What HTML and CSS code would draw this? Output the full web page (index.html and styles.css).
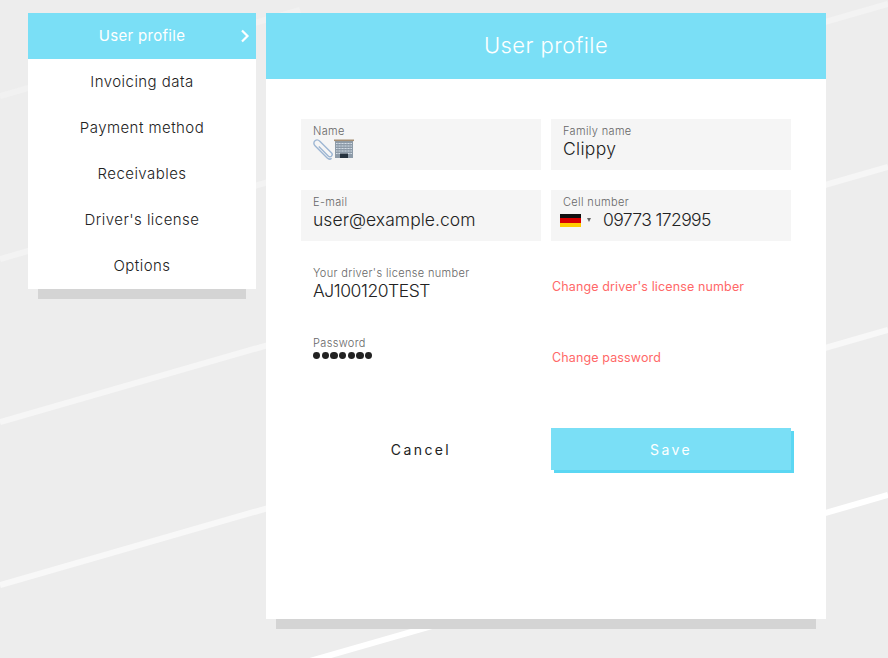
FILE: index.html
```html
<!DOCTYPE html>
<html lang="en">
<head>
<meta charset="utf-8">
<title>User profile</title>
<link rel="stylesheet" href="styles.css">
</head>
<body>
<svg class="backdrop" viewBox="0 0 888 658" width="888" height="658" aria-hidden="true">
  <path class="l1" d="M0 96 L300 10"/>
  <path class="l2" d="M0 259 L888 4"/>
  <path class="l3" d="M0 422 L888 167"/>
  <path class="l4" d="M0 585 L888 330"/>
  <path class="l5" d="M0 750 L888 495"/>
</svg>
<div class="page">
  <nav class="menu">
    <a class="menu-item active">User profile
      <svg class="chevron" viewBox="0 0 10 14" width="10" height="14"><path d="M2 1.5 L7.5 7 L2 12.5"/></svg>
    </a>
    <a class="menu-item">Invoicing data</a>
    <a class="menu-item">Payment method</a>
    <a class="menu-item">Receivables</a>
    <a class="menu-item">Driver's license</a>
    <a class="menu-item">Options</a>
  </nav>
  <main class="panel">
    <h1 class="panel-title">User profile</h1>
    <form class="form">
      <div class="field filled">
        <label>Name</label>
        <div class="value emoji">
          <svg viewBox="0 0 21 21" width="21" height="21"><path d="M18.6 19.2 C17.4 20.4 15.4 20.2 14.2 19 L2 6.8 C0.4 5.2 0.6 3 2 1.8 C3.4 0.6 5.4 0.8 6.8 2.2 L18.4 13.8 C19.4 14.8 19.4 16.2 18.4 17.2 C17.4 18 16.2 18 15.2 17 L5.8 7.6" fill="none" stroke="#9db6d3" stroke-width="1.4"/></svg>
          <svg viewBox="0 0 20 20" width="20" height="20"><rect x="1" y="1" width="18" height="18" fill="#8d9ba8"/><rect y="0.5" width="20" height="1.6" fill="#a68f75"/><path d="M2 4.5H18M2 7H18M2 9.5H18M2 12H18M2 14.5H18" stroke="#d3dde6" stroke-width="1.1"/><path d="M4 3V19M7 3V14M10 3V14M13 3V14M16 3V19" stroke="#8d9ba8" stroke-width="0.8"/><rect x="6" y="14.5" width="8" height="4.5" fill="#26333f"/></svg>
        </div>
      </div>
      <div class="field filled">
        <label>Family name</label>
        <div class="value">Clippy</div>
      </div>
      <div class="field filled">
        <label>E-mail</label>
        <div class="value email">user@example.com</div>
      </div>
      <div class="field filled">
        <label>Cell number</label>
        <div class="value phone">
          <span class="flag"></span><span class="caret"></span>09773 172995
        </div>
      </div>
      <div class="field">
        <label>Your driver's license number</label>
        <div class="value license">AJ100120TEST</div>
      </div>
      <div class="field change"><a class="link">Change driver's license number</a></div>
      <div class="field password">
        <label>Password</label>
        <div class="dots"><i></i><i></i><i></i><i></i><i></i><i></i><i></i></div>
      </div>
      <div class="field change"><a class="link">Change password</a></div>
      <div class="actions">
        <button type="button" class="btn cancel">Cancel</button>
        <button type="button" class="btn save">Save</button>
      </div>
    </form>
  </main>
</div>
</body>
</html>
```
FILE: styles.css
```css
* { box-sizing: border-box; }
html, body { margin: 0; height: 100%; }
body {
  background: #ededed;
  font-family: "Inter", "Lato", sans-serif;
  font-weight: 300;
  color: #222;
  overflow: hidden;
}
.backdrop { position: absolute; left: 0; top: 0; }
.backdrop path { fill: none; stroke-width: 6; }
.l1 { stroke: #f1f1f1; }
.l2 { stroke: #f3f3f3; }
.l3 { stroke: #f6f6f6; }
.l4 { stroke: #f8f8f8; }
.l5 { stroke: #ffffff; }
.page {
  position: relative;
  display: flex;
  align-items: flex-start;
  gap: 10px;
  padding: 13px 0 0 28px;
}
.menu {
  width: 228px;
  background: #fff;
  display: flex;
  flex-direction: column;
  box-shadow: 0 20px 0 -10px #d4d4d4;
}
.menu-item {
  position: relative;
  height: 46px;
  padding-bottom: 2px;
  display: flex;
  align-items: center;
  justify-content: center;
  font-size: 15px;
  letter-spacing: 0.45px;
}
.menu-item.active { background: #7adff6; color: #fff; font-weight: 400; letter-spacing: 0.3px; }
.chevron { position: absolute; right: 6px; top: 16px; }
.chevron path { fill: none; stroke: #fff; stroke-width: 2.2; }
.panel {
  width: 560px;
  height: 606px;
  background: #fff;
  box-shadow: 0 20px 0 -10px #d4d4d4;
}
.panel-title {
  margin: 0;
  height: 66px;
  padding-bottom: 2px;
  background: #7adff6;
  color: #fff;
  font-size: 22px;
  font-weight: 300;
  letter-spacing: 0.45px;
  display: flex;
  align-items: center;
  justify-content: center;
}
.form {
  display: grid;
  grid-template-columns: 240px 240px;
  column-gap: 10px;
  row-gap: 20px;
  padding: 40px 35px 0;
}
.field { height: 51px; padding: 6px 12px 0; }
.field.filled { background: #f5f5f5; }
.field.password { padding-top: 5px; }
.field label {
  display: block;
  font-size: 11px;
  line-height: 12px;
  color: #666;
  letter-spacing: 0.35px;
}
.value {
  font-size: 17.5px;
  line-height: 24px;
  letter-spacing: 0.3px;
  color: #222;
}
.email { letter-spacing: 0.05px; }
.license { letter-spacing: -0.45px; }
.emoji { display: flex; height: 21px; align-items: flex-start; margin-top: 2px; }
.phone { display: flex; align-items: center; margin-left: -3px; letter-spacing: -0.6px; }
.flag {
  width: 21px;
  height: 13px;
  background: linear-gradient(#111 0 33%, #d80000 33% 66%, #ffce00 66%);
  margin-right: 6px;
}
.caret {
  width: 0;
  height: 0;
  border-left: 2.5px solid transparent;
  border-right: 2.5px solid transparent;
  border-top: 4px solid #666;
  margin-right: 12px;
}
.dots { display: flex; gap: 1.5px; margin-top: 3px; }
.dots i { width: 7.2px; height: 7px; border-radius: 50%; background: #222; }
.change { padding: 0 1px; display: flex; align-items: center; }
.link { color: #ff6868; font-size: 12.5px; font-weight: 400; letter-spacing: 0.13px; }
.actions {
  grid-column: 1 / 3;
  display: grid;
  grid-template-columns: 240px 240px;
  column-gap: 10px;
  margin-top: 25px;
}
.btn {
  height: 42px;
  border: 0;
  font: inherit;
  font-size: 14px;
  font-weight: 400;
  letter-spacing: 2.4px;
  background: none;
}
.cancel { color: #222; }
.save { background: #7adff6; color: #fff; box-shadow: 3px 3px 0 #5bd7f3; }
```
